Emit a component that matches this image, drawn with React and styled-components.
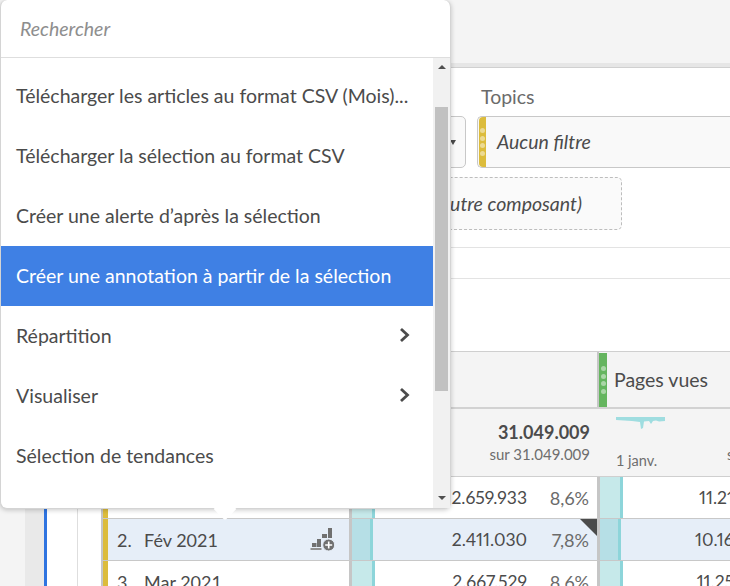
import React from "react";
import styled, { createGlobalStyle } from "styled-components";

const GlobalStyle = createGlobalStyle`
  html, body { margin: 0; padding: 0; background: #fff; }
  * { box-sizing: border-box; }
  body { font-family: "Lato", "Liberation Sans", sans-serif; color: #4b4b4b; }
`;

const menuItems = [
  { label: "Télécharger les articles au format CSV (Mois)..." },
  { label: "Télécharger la sélection au format CSV" },
  { label: "Créer une alerte d’après la sélection" },
  { label: "Créer une annotation à partir de la sélection", active: true },
  { label: "Répartition", more: true },
  { label: "Visualiser", more: true },
  { label: "Sélection de tendances" },
];

const rows = [
  { rank: "1.", name: "Jan 2021", value: "2.659.933", pct: "8,6%", bar: 20, views: "11.213" },
  { rank: "2.", name: "Fév 2021", value: "2.411.030", pct: "7,8%", bar: 18, views: "10.164", selected: true },
  { rank: "3.", name: "Mar 2021", value: "2.667.529", pct: "8,6%", bar: 20, views: "11.252" },
];

const Chevron = () => (
  <svg width="14" height="16" viewBox="0 0 14 16">
    <path d="M3 2 L9.5 8 L3 14" fill="none" stroke="#4b4b4b" strokeWidth="2.8" />
  </svg>
);

const AddChartIcon = () => (
  <svg width="26" height="26" viewBox="0 0 26 26">
    <rect x="0.5" y="21" width="11" height="2" fill="#909090" />
    <rect x="2" y="16" width="4.5" height="4" fill="#707070" />
    <rect x="7" y="12" width="4" height="8" fill="#707070" />
    <rect x="12" y="7" width="5" height="4" fill="#707070" />
    <rect x="18" y="1" width="4" height="10" fill="#707070" />
    <circle cx="18.7" cy="18" r="6" fill="#707070" stroke="#e6eef8" strokeWidth="1" />
    <path d="M18.7 14.5 V21.5 M15.2 18 H22.2" stroke="#fff" strokeWidth="1.6" />
  </svg>
);

const Sparkline = () => (
  <svg width="50" height="14" viewBox="0 0 50 14">
    <path
      d="M0 1 H49 V5 L43 5.5 L40 4.5 L37 5 L35 8 L33 5 L28 5.5 L27 12 L25 13 L24 6 L16 5 L0 4 Z"
      fill="#9fdde0"
    />
  </svg>
);

const Handle = () => (
  <Dots>
    <i />
    <i />
    <i />
    <i />
  </Dots>
);

export default function App() {
  return (
    <Page>
      <GlobalStyle />
      <TopBar />
      <Main>
        <Rail />
        <Content>
          <FilterPanel>
            <Fields>
              <SelectField>
                <Caret />
              </SelectField>
              <Field>
                <FieldLabel>Topics</FieldLabel>
                <FilterBox>
                  <ColorTab $color="#dcbc3c">
                    <Handle />
                  </ColorTab>
                  <FilterText>Aucun filtre</FilterText>
                </FilterBox>
              </Field>
            </Fields>
            <DropZone>(Déposer un autre composant)</DropZone>
          </FilterPanel>
          <Strip />
          <TableArea>
            <BlueRail />
            <Table>
              <HeadRow>
                <HeadCell />
                <HeadCell $divided />
                <HeadCell $divided>
                  <ColumnTab $color="#65b55f">
                    <Handle />
                  </ColumnTab>
                  <ColumnTitle>Pages vues</ColumnTitle>
                </HeadCell>
              </HeadRow>
              <SummaryRow>
                <SummaryCell />
                <TotalCell>
                  <TotalValue>31.049.009</TotalValue>
                  <TotalOf>sur 31.049.009</TotalOf>
                </TotalCell>
                <TrendCell>
                  <TrendChart>
                    <Sparkline />
                    <TrendDate>1 janv.</TrendDate>
                  </TrendChart>
                  <NextTotal>sur 121.049.009</NextTotal>
                </TrendCell>
              </SummaryRow>
              {rows.map((r) => (
                <Row key={r.rank} $selected={r.selected}>
                  <NameCell>
                    <Rank>{r.rank}</Rank>
                    <Name>{r.name}</Name>
                    {r.selected && <AddChartIcon />}
                  </NameCell>
                  <MetricCell>
                    <Bar $selected={r.selected} $width={r.bar} />
                    <Num>{r.value}</Num>
                    <Pct>{r.pct}</Pct>
                    {r.selected && <Corner />}
                  </MetricCell>
                  <MetricCell>
                    <Bar $selected={r.selected} $width={r.bar} />
                    <Num>{r.views}</Num>
                  </MetricCell>
                </Row>
              ))}
            </Table>
          </TableArea>
        </Content>
      </Main>

      <Popover>
        <SearchRow>Rechercher</SearchRow>
        <MenuBody>
          <Menu>
            {menuItems.map((item) => (
              <MenuItem key={item.label} $active={item.active}>
                <span>{item.label}</span>
                {item.more && <Chevron />}
              </MenuItem>
            ))}
          </Menu>
          <Scrollbar>
            <ArrowUp />
            <Thumb />
            <ArrowDown />
          </Scrollbar>
        </MenuBody>
        <Tip />
      </Popover>
    </Page>
  );
}

const Page = styled.div`
  position: relative;
  width: 730px;
  height: 586px;
  overflow: hidden;
  background: #fff;
  display: flex;
  flex-direction: column;
`;

const TopBar = styled.div`
  height: 68px;
  flex: none;
  background: #f4f4f4;
  border-bottom: 1px solid #d0d0d0;
  box-shadow: inset 0 -4px 0 #e6e6e6;
`;

const Main = styled.div`
  flex: 1;
  display: flex;
  min-height: 0;
`;

const Rail = styled.div`
  width: 44px;
  flex: none;
  background: #f4f4f4;
  border-right: 19px solid #e9e9e9;
`;

const Content = styled.div`
  flex: 1;
  min-width: 0;
  display: flex;
  flex-direction: column;
`;

const FilterPanel = styled.div`
  height: 180px;
  flex: none;
  padding: 17px 0 0 50px;
  border-bottom: 1px solid #e3e3e3;
`;

const Fields = styled.div`
  display: flex;
  align-items: flex-end;
  gap: 11px;
`;

const Field = styled.div`
  flex: 1;
  min-width: 0;
`;

const FieldLabel = styled.div`
  font-size: 19.5px;
  line-height: 24px;
  margin: 0 0 7px 4px;
  color: #6b6b6b;
`;

const SelectField = styled.div`
  width: 372px;
  height: 52px;
  flex: none;
  display: flex;
  align-items: center;
  justify-content: flex-end;
  padding-right: 9px;
  background: #f9f9f9;
  border: 1px solid #c8c8c8;
  border-radius: 5px;
`;

const Caret = styled.div`
  width: 0;
  height: 0;
  border-left: 3px solid transparent;
  border-right: 3px solid transparent;
  border-top: 5px solid #4b4b4b;
`;

const FilterBox = styled.div`
  height: 52px;
  display: flex;
  align-items: stretch;
  background: #f9f9f9;
  border: 1px solid #c8c8c8;
  border-right: none;
  border-radius: 5px 0 0 5px;
  padding-left: 1px;
`;

const ColorTab = styled.div`
  width: 7px;
  flex: none;
  display: flex;
  align-items: center;
  justify-content: center;
  background: ${(p) => p.$color};
  border-radius: 4px 0 0 4px;
`;

const Dots = styled.div`
  display: flex;
  flex-direction: column;
  gap: 2.5px;
  i {
    display: block;
    width: 5px;
    height: 5px;
    border-radius: 50%;
    background: rgba(255, 255, 255, 0.45);
  }
`;

const FilterText = styled.div`
  align-self: center;
  padding: 0 0 2px 11px;
  font-size: 19.5px;
  font-style: italic;
  color: #4b4b4b;
`;

const DropZone = styled.div`
  width: 528px;
  height: 53px;
  margin-top: 9px;
  display: flex;
  align-items: center;
  justify-content: flex-end;
  padding-right: 39px;
  font-size: 19.5px;
  font-style: italic;
  white-space: nowrap;
  background: #fafafa;
  border: 1px dashed #bdbdbd;
  border-radius: 5px;
`;

const Strip = styled.div`
  height: 31px;
  flex: none;
  border-bottom: 1px solid #e3e3e3;
`;

const TableArea = styled.div`
  flex: 1;
  display: flex;
  padding-top: 72px;
  min-height: 0;
`;

const BlueRail = styled.div`
  width: 34px;
  flex: none;
  margin-top: -72px;
  border-left: 3px solid #2f74e0;
  border-right: 1px solid #dedede;
  margin-right: 23px;
`;

const Table = styled.div`
  flex: none;
  width: 660px;
  border-left: 2px solid #c6c6c6;
  border-top: 1px solid #cfcfcf;
`;

const columns = "246px 248px 155px";

const HeadRow = styled.div`
  display: grid;
  grid-template-columns: ${columns};
  height: 57px;
  background: #f4f4f4;
  border-bottom: 2px solid #d2d2d2;
`;

const HeadCell = styled.div`
  display: flex;
  align-items: stretch;
  ${(p) => p.$divided && "border-left: 2px solid #c6c6c6;"}
`;

const ColumnTab = styled.div`
  width: 8px;
  flex: none;
  margin-top: 1px;
  display: flex;
  align-items: center;
  justify-content: center;
  background: ${(p) => p.$color};
`;

const ColumnTitle = styled.div`
  align-self: center;
  padding-left: 7px;
  white-space: nowrap;
  font-size: 19.5px;
  color: #4b4b4b;
`;

const SummaryRow = styled.div`
  display: grid;
  grid-template-columns: 246px 248px 236px;
  height: 68px;
  background: #f4f4f4;
  border-bottom: 1px solid #cfcfcf;
`;

const SummaryCell = styled.div``;

const TotalCell = styled.div`
  padding: 11px 7px 0 0;
  text-align: right;
`;

const TotalValue = styled.div`
  font-size: 18px;
  font-weight: 700;
  line-height: 24px;
  color: #4b4b4b;
`;

const TotalOf = styled.div`
  font-size: 15px;
  line-height: 20px;
  color: #6e6e6e;
`;

const TrendCell = styled.div`
  display: flex;
  padding: 7px 0 0 19px;
  white-space: nowrap;
`;

const TrendChart = styled.div`
  width: 111px;
  flex: none;
  svg {
    display: block;
  }
`;

const TrendDate = styled.div`
  margin-top: 22px;
  font-size: 14.5px;
  line-height: 18px;
  color: #6e6e6e;
`;

const NextTotal = styled.div`
  margin-top: 28px;
  font-size: 15px;
  line-height: 20px;
  color: #6e6e6e;
`;

const Row = styled.div`
  display: grid;
  grid-template-columns: ${columns};
  height: 42px;
  background: ${(p) => (p.$selected ? "#e6eef8" : "#fff")};
  border-bottom: 1px solid #c8c8c8;
`;

const NameCell = styled.div`
  display: flex;
  align-items: center;
  padding: 0 13px 0 9px;
  border-left: 5px solid #dcbc3c;
`;

const Rank = styled.span`
  width: 27px;
  flex: none;
  font-size: 18px;
`;

const Name = styled.span`
  flex: 1;
  font-size: 18px;
`;

const MetricCell = styled.div`
  position: relative;
  display: flex;
  align-items: center;
  border-left: 3px solid #c6c6c6;
  padding-right: 8px;
`;

const Bar = styled.div`
  align-self: stretch;
  width: ${(p) => p.$width + 3}px;
  flex: none;
  background: ${(p) => (p.$selected ? "#b6dfe6" : "#c6e9ea")};
  border-right: 3px solid #8dd5da;
`;

const Num = styled.span`
  flex: 1;
  text-align: right;
  font-size: 17.5px;
  font-variant-numeric: proportional-nums;
`;

const Pct = styled.span`
  width: 62px;
  flex: none;
  text-align: right;
  font-size: 18px;
  font-variant-numeric: proportional-nums;
  color: #6b6b6b;
`;

const Corner = styled.div`
  position: absolute;
  top: 0;
  right: 0;
  width: 0;
  height: 0;
  border-top: 17px solid #4b4b4b;
  border-left: 17px solid transparent;
`;

const Popover = styled.div`
  position: absolute;
  left: 0;
  top: 0;
  width: 451px;
  height: 509px;
  display: flex;
  flex-direction: column;
  background: #fff;
  border: 1px solid #d4d4d4;
  border-top: none;
  border-radius: 7px;
  box-shadow: 0 1px 5px rgba(0, 0, 0, 0.22);
`;

const SearchRow = styled.div`
  height: 58px;
  flex: none;
  display: flex;
  align-items: center;
  padding-left: 19px;
  font-size: 19.5px;
  font-style: italic;
  color: #8e8e8e;
  border-bottom: 1px solid #dedede;
`;

const MenuBody = styled.div`
  flex: 1;
  min-height: 0;
  display: flex;
`;

const Menu = styled.div`
  flex: 1;
  min-width: 0;
  padding-top: 8px;
`;

const MenuItem = styled.div`
  height: 60px;
  display: flex;
  align-items: center;
  justify-content: space-between;
  padding: 0 21px 2px 15px;
  font-size: 19.5px;
  color: ${(p) => (p.$active ? "#fff" : "#4b4b4b")};
  background: ${(p) => (p.$active ? "#3f80e4" : "transparent")};
`;

const Scrollbar = styled.div`
  width: 17px;
  flex: none;
  display: flex;
  flex-direction: column;
  align-items: center;
  background: #f1f1f1;
`;

const ArrowUp = styled.div`
  margin-top: 7px;
  width: 0;
  height: 0;
  border-left: 4px solid transparent;
  border-right: 4px solid transparent;
  border-bottom: 4px solid #4f4f4f;
`;

const Thumb = styled.div`
  width: 13px;
  height: 284px;
  margin-top: 38px;
  background: #c1c1c1;
`;

const ArrowDown = styled.div`
  margin-top: 105px;
  width: 0;
  height: 0;
  border-left: 4px solid transparent;
  border-right: 4px solid transparent;
  border-top: 4px solid #4f4f4f;
`;

const Tip = styled.div`
  position: absolute;
  left: 216px;
  bottom: -9px;
  width: 16px;
  height: 16px;
  background: #fff;
  transform: rotate(45deg);
  border-radius: 0 0 2px 0;
`;
